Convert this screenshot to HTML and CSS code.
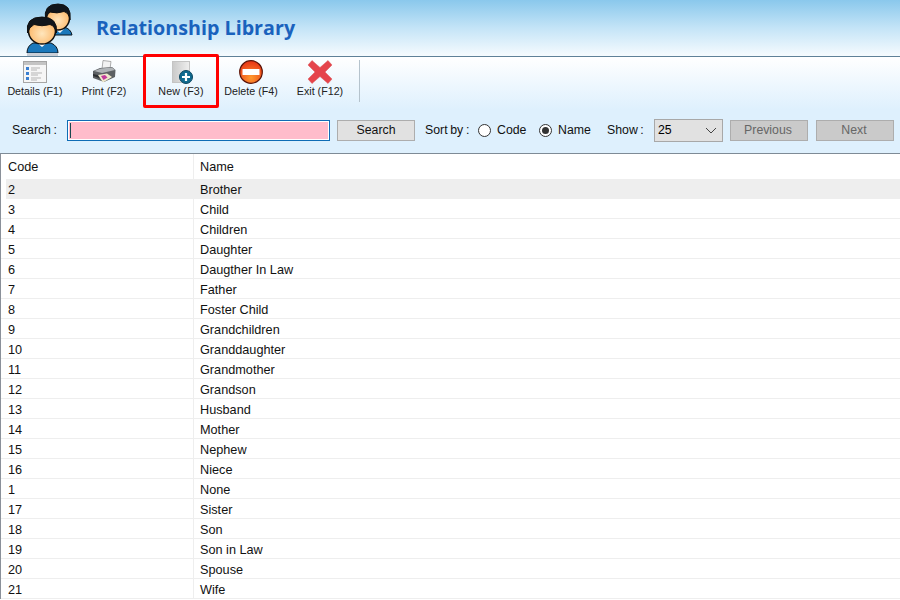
FILE: index.html
```html
<!DOCTYPE html>
<html>
	<head>
		<meta charset="utf-8" />
		<title>Relationship Library</title>
		<link rel="stylesheet" href="styles.css">
	</head>
	<body>
		<div class="banner">
			<svg class="logo" width="50" height="56" viewBox="24 0 50 56">
				<defs>
					<radialGradient id="skin" cx="0.5" cy="0.6" r="0.6">
						<stop offset="0" stop-color="#ffe6bd"/>
						<stop offset="1" stop-color="#fcb25f"/>
					</radialGradient>
				</defs>
				<!-- back person -->
				<path d="M52 30 L64 27 Q71 29 72 35 L54 35 Z" fill="#1b78bb" stroke="#0b1720" stroke-width="1"/>
				<path d="M55 29 L60 33 L65 28 Z" fill="#fff"/>
				<ellipse cx="58" cy="18" rx="11.500" ry="12" fill="url(#skin)" stroke="#111" stroke-width="1.500"/>
				<path d="M45.500 20 Q43 4 58 4 Q72 4 70 20 Q69 13 64 11.500 Q57 14 50 12 Q47 14 45.500 20 Z" fill="#10151b" stroke="#111"/>
				<!-- front person -->
				<path d="M33 43 Q27 46 27 53 L58 53 Q58 46 51 43 Z" fill="#1b78bb" stroke="#0b1720" stroke-width="1"/>
				<path d="M36 42 L42 47 L48 42 Z" fill="#fff"/>
				<rect x="27" y="53" width="31" height="3" fill="#c9ced6"/>
				<ellipse cx="42" cy="31" rx="13.500" ry="13" fill="url(#skin)" stroke="#111" stroke-width="1.500"/>
				<path d="M27.500 33 Q25 17 42 17 Q58 17 56.500 33 Q55 26 50 24.500 Q42 27 34 24.500 Q29 27 27.500 33 Z" fill="#10151b" stroke="#111"/>
			</svg>
			<h1>Relationship Library</h1>
		</div>

		<div class="toolbar">
			<a class="tool tool-details">
				<svg width="24" height="24" viewBox="0 0 24 24">
					<rect x="0.500" y="1.500" width="23" height="21" fill="#f6f6f6" stroke="#a5a5a5"/>
					<rect x="1" y="2" width="22" height="3" fill="#c4c4c4"/>
					<rect x="3" y="7" width="3" height="3" fill="#3b7fd0"/>
					<rect x="3" y="12" width="3" height="3" fill="#3b7fd0"/>
					<rect x="3" y="17" width="3" height="3" fill="#3b7fd0"/>
					<path d="M8 8h9M8 10h6M8 13h11M8 15h7M8 18h10M8 20h6" stroke="#b5b5b5"/>
				</svg>
				<span>Details (F1)</span>
			</a>
			<a class="tool tool-print">
				<svg width="24" height="24" viewBox="0 0 24 24">
					<path d="M11 0.500 L19 1.500 L18 9 L10 9 Z" fill="#f2f2f2" stroke="#8d8d8d" stroke-width="0.700"/>
					<path d="M1 11 L8 8 L20 7 L23.500 10 L23 17 L12 22 L1 18 Z" fill="#5c6063"/>
					<path d="M2 11 L9 8.500 L20 7.500 L23 10 L10 13 Z" fill="#b0b4b7"/>
					<path d="M1 14 L10 16 L10 19 L1 16 Z" fill="#2e3134"/>
					<path d="M6 15 L15 13.500 L20 17 L11 22.500 Z" fill="#efe8cc"/>
					<path d="M9 16 L13 15 L15.500 17.500 L11.500 20 Z" fill="#c2399b"/>
				</svg>
				<span>Print (F2)</span>
			</a>
			<a class="tool tool-new">
				<svg width="24" height="24" viewBox="0 0 24 24">
					<defs>
						<linearGradient id="page" x1="0" y1="0" x2="1" y2="0">
							<stop offset="0" stop-color="#c9c9c9"/>
							<stop offset="1" stop-color="#efefef"/>
						</linearGradient>
					</defs>
					<rect x="3.500" y="1.500" width="17" height="21" fill="url(#page)" stroke="#c4c4c4"/>
					<circle cx="17" cy="17" r="6.500" fill="#0f6a8f" stroke="#0c4660"/>
					<path d="M17 13 V21 M13 17 H21" stroke="#fff" stroke-width="2.200"/>
				</svg>
				<span>New (F3)</span>
			</a>
			<a class="tool tool-delete">
				<svg width="24" height="24" viewBox="0 0 24 24">
					<defs>
						<radialGradient id="red" cx="0.5" cy="0.75" r="0.8">
							<stop offset="0" stop-color="#ff9a2e"/>
							<stop offset="1" stop-color="#e62a12"/>
						</radialGradient>
					</defs>
					<circle cx="12" cy="12" r="11.300" fill="url(#red)" stroke="#5a1408" stroke-width="1.200"/>
					<rect x="3.500" y="9" width="17" height="6" rx="0.500" fill="#fff"/>
				</svg>
				<span>Delete (F4)</span>
			</a>
			<a class="tool tool-exit">
				<svg width="26" height="24" viewBox="0 0 26 24">
					<path d="M1 5 L5 0.500 L13 7.500 L21 0.500 L25 5 L18 12 L25 19 L21 23.500 L13 16.500 L5 23.500 L1 19 L8 12 Z" fill="#e5444b" stroke="#d8565a" stroke-width="0.500"/>
				</svg>
				<span>Exit (F12)</span>
			</a>
			<div class="divider"></div>
		</div>

		<div class="searchbar">
			<label class="search-label">Search :</label>
			<input class="search-input" type="text" />
			<button class="btn btn-search">Search</button>
			<span class="sort-label">Sort by :</span>
			<span class="radio"></span>
			<span class="radio-text code-text">Code</span>
			<span class="radio checked"></span>
			<span class="radio-text name-text">Name</span>
			<span class="show-label">Show :</span>
			<div class="select">
				<span>25</span>
				<svg width="12" height="7" viewBox="0 0 12 7"><path d="M1 1 L6 6 L11 1" fill="none" stroke="#444" stroke-width="1"/></svg>
			</div>
			<button class="btn btn-off btn-prev">Previous</button>
			<button class="btn btn-off btn-next">Next</button>
		</div>

		<table class="list">
			<thead>
				<tr><th>Code</th><th>Name</th></tr>
			</thead>
			<tbody>
				<tr class="selected"><td>2</td><td>Brother</td></tr>
				<tr><td>3</td><td>Child</td></tr>
				<tr><td>4</td><td>Children</td></tr>
				<tr><td>5</td><td>Daughter</td></tr>
				<tr><td>6</td><td>Daugther In Law</td></tr>
				<tr><td>7</td><td>Father</td></tr>
				<tr><td>8</td><td>Foster Child</td></tr>
				<tr><td>9</td><td>Grandchildren</td></tr>
				<tr><td>10</td><td>Granddaughter</td></tr>
				<tr><td>11</td><td>Grandmother</td></tr>
				<tr><td>12</td><td>Grandson</td></tr>
				<tr><td>13</td><td>Husband</td></tr>
				<tr><td>14</td><td>Mother</td></tr>
				<tr><td>15</td><td>Nephew</td></tr>
				<tr><td>16</td><td>Niece</td></tr>
				<tr><td>1</td><td>None</td></tr>
				<tr><td>17</td><td>Sister</td></tr>
				<tr><td>18</td><td>Son</td></tr>
				<tr><td>19</td><td>Son in Law</td></tr>
				<tr><td>20</td><td>Spouse</td></tr>
				<tr><td>21</td><td>Wife</td></tr>
			</tbody>
		</table>
	</body>
</html>
```

FILE: styles.css
```css
html, body { margin: 0; padding: 0; height: 600px; overflow: hidden; }
body {
	background: #fff;
	font-family: "Liberation Sans", Arial, sans-serif;
	font-size: 12px;
	color: #111;
}

.banner {
	height: 56px;
	display: flex;
	align-items: flex-start;
	background: linear-gradient(#8ac8ec, #c4e4f7 50%, #f6fbfe);
	border-bottom: 1px solid #5f8198;
}
.logo { flex: none; margin-left: 24px; }
.banner h1 {
	margin: 13px 0 0 22px;
	font-family: "Open Sans", sans-serif;
	font-size: 19.700px;
	line-height: 30px;
	font-weight: 700;
	color: #1a62bd;
}

.toolbar {
	height: 53px;
	background: linear-gradient(#fff, #def0fd);
	position: relative;
}
.tool {
	display: flex;
	flex-direction: column;
	align-items: center;
	font-size: 10.700px;
	color: #222;
	position: absolute;
	top: 3px;
	width: 76px;
}
.tool svg { display: block; }
.tool span { line-height: 14px; }
.tool-details { left: -3px; }
.tool-print { left: 66px; }
.tool-new {
	left: 143px;
	top: -3px;
	height: 45px;
	width: 70px;
	border: 3px solid #f00;
	border-radius: 2px;
	padding-top: 3px;
	letter-spacing: 0.200px;
}
.tool-delete { left: 213px; }
.tool-exit { left: 282px; }
.divider {
	position: absolute;
	left: 359px;
	top: 3px;
	height: 42px;
	width: 1px;
	background: #b5c3cd;
}

.searchbar {
	height: 43px;
	box-sizing: border-box;
	background: #def0fd;
	display: flex;
	align-items: center;
	padding-bottom: 3px;
	font-size: 12.300px;
}
.search-label { margin-left: 12px; width: 55px; word-spacing: -1px; }
.search-input {
	width: 263px;
	height: 21px;
	padding: 0;
	box-sizing: border-box;
	background: linear-gradient(#17484f, #17484f) 2px 2px / 1px 15px no-repeat, #ffbccb;
	border: 1px solid #0f6cb5;
	outline: 1px solid #fff;
	outline-offset: -2px;
}
.btn {
	height: 21px;
	padding: 0;
	box-sizing: border-box;
	border: 1px solid #adadad;
	background: #e1e1e1;
	font: 12.300px "Liberation Sans", Arial, sans-serif;
	color: #111;
}
.btn-search { width: 78px; margin-left: 7px; }
.btn-off { width: 78px; background: #cacaca; color: #666; padding-right: 2px; }
.sort-label { margin-left: 10px; width: 53px; word-spacing: -0.700px; }
.radio {
	width: 13px;
	height: 13px;
	box-sizing: border-box;
	border: 1px solid #333;
	border-radius: 50%;
	background: #fff;
	position: relative;
}
.radio.checked::after {
	content: "";
	position: absolute;
	left: 2px;
	top: 2px;
	width: 7px;
	height: 7px;
	border-radius: 50%;
	background: #333;
}
.radio-text { margin-left: 6px; }
.code-text { width: 42px; }
.name-text { width: 49px; }
.show-label { width: 47px; word-spacing: -1px; }
.select {
	width: 69px;
	height: 23px;
	box-sizing: border-box;
	border: 1px solid #a8a8a8;
	background: #e1e1e1;
	display: flex;
	align-items: center;
	justify-content: space-between;
	padding: 0 3px;
	color: #000;
}
.select svg { margin-right: 2px; }
.btn-prev { margin-left: 7px; }
.btn-next { margin-left: 8px; }

.list {
	width: 100%;
	border-collapse: separate;
	border-spacing: 0;
	table-layout: fixed;
	border-top: 1px solid #7e8b96;
	border-left: 1px solid #8a9099;
	font-size: 12.700px;
}
.list th, .list td {
	text-align: left;
	padding: 0 0 0 6px;
	font-weight: normal;
	box-sizing: border-box;
}
.list th:first-child, .list td:first-child {
	width: 193px;
	border-right: 1px solid #eee;
	padding-left: 7px;
}
.list th { height: 25px; line-height: 23px; padding-top: 2px; }
.list td { height: 20px; line-height: 16px; padding-top: 3px; border-bottom: 1px solid #eee; }
.list .selected td { background: #eee; border-bottom: 0; border-right: 0; padding-top: 2px; }
.list .selected td:first-child { background: linear-gradient(#eee, #eee) 5px 0 no-repeat; }
```
